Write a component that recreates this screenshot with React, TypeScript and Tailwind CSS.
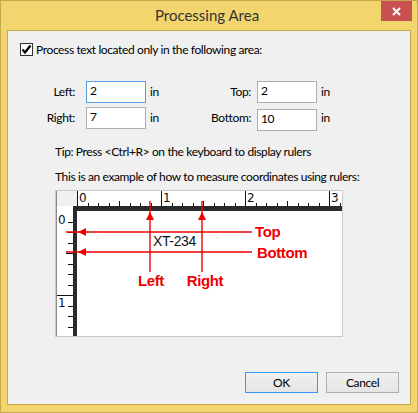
import React from "react";

const UI = { fontFamily: 'Lato, "Noto Sans", sans-serif' };

function Ruler() {
  const topTicks: number[] = [];
  for (let i = 0; i <= 25; i++) {
    const x = 22 + i * 10.5;
    if (x < 287) topTicks.push(x);
  }
  const leftTicks: number[] = [];
  for (let i = 1; i <= 11; i++) {
    const y = 21 + i * 10.5;
    if (i !== 8) leftTicks.push(y);
  }
  return (
    <svg width="288" height="147" viewBox="0 0 288 147" className="block">
      <rect x="0.5" y="0.5" width="287" height="146" fill="#ffffff" stroke="#c9c9c9" />
      <line x1="1.5" y1="1" x2="1.5" y2="146" stroke="#8a8a8a" />
      <rect x="2" y="1" width="20" height="15" fill="#f0f0f0" />
      <line x1="22.5" y1="1" x2="22.5" y2="16" stroke="#111" />
      {[106, 190, 274].map((x) => (
        <line key={x} x1={x + 0.5} y1="1" x2={x + 0.5} y2="16" stroke="#111" />
      ))}
      {topTicks.map((x, i) =>
        i % 8 === 0 ? null : (
          <line key={i} x1={Math.round(x) + 0.5} y1={i % 4 === 0 ? 11 : 13} x2={Math.round(x) + 0.5} y2="16" stroke="#111" />
        )
      )}
      <g fontFamily='"DejaVu Sans", sans-serif' fontSize="12" fill="#111">
        <text x="24" y="12">0</text>
        <text x="108" y="12">1</text>
        <text x="192" y="12">2</text>
        <text x="276" y="12">3</text>
      </g>
      <rect x="18" y="16" width="269" height="5" fill="#2a2a2a" />
      <rect x="18" y="16" width="4" height="130" fill="#2a2a2a" />
      <line x1="2" y1="105.5" x2="18" y2="105.5" stroke="#111" />
      {leftTicks.map((y, i) => (
        <line key={i} x1={i === 3 ? 11 : 13} y1={Math.round(y) + 0.5} x2="18" y2={Math.round(y) + 0.5} stroke="#111" />
      ))}
      <g fontFamily='"DejaVu Sans", sans-serif' fontSize="12" fill="#111">
        <text x="3" y="34">0</text>
        <text x="3" y="117">1</text>
      </g>
      <text x="98" y="56" fontFamily='"Liberation Sans", Arial, sans-serif' fontSize="14" fill="#111">XT-234</text>
      <rect x="41" y="48" width="1" height="1" fill="#f3c58a" />
      <rect x="161" y="47" width="1" height="1" fill="#f3c58a" />
      <g stroke="#ee0000" strokeWidth="1.4" fill="none">
        <line x1="11" y1="42" x2="197" y2="42" />
        <line x1="11" y1="62" x2="197" y2="62" />
        <line x1="95" y1="11" x2="95" y2="82" />
        <line x1="147" y1="11" x2="147" y2="82" />
      </g>
      <g fill="#ee0000">
        <polygon points="23,42 31,38 31,46" />
        <polygon points="23,62 31,58 31,66" />
        <polygon points="95,22 91,30 99,30" />
        <polygon points="147,22 143,30 151,30" />
      </g>
      <g fontFamily='"Liberation Sans", Arial, sans-serif' fontSize="15" fontWeight="bold" fill="#ee0000">
        <text x="200" y="47">Top</text>
        <text x="202" y="68">Bottom</text>
        <text x="96" y="96" textAnchor="middle">Left</text>
        <text x="150" y="96" textAnchor="middle">Right</text>
      </g>
    </svg>
  );
}

function Field({ value, focused }: { value: string; focused?: boolean }) {
  return (
    <div
      className={
        "w-[60px] h-[22px] bg-white border px-[3px] flex items-center text-[12px] leading-none text-black " +
        (focused ? "border-[#569de5]" : "border-[#abadb3]")
      }
    >
      <span className="-mt-[2px]">{value}</span>
    </div>
  );
}

export default function App() {
  return (
    <div className="w-[418px] h-[413px] bg-[#f2d56c] border border-[#c5a94f] relative flex flex-col whitespace-nowrap" style={UI}>
      <div className="h-[29px] flex items-center justify-center pr-[4px]">
        <span className="text-[15px] text-[#333333] leading-none -mt-[1px]">Processing Area</span>
      </div>
      <div className="absolute top-0 right-[5px] w-[31px] h-[20px] bg-[#c75050] flex items-center justify-center">
        <svg width="9" height="9" viewBox="0 0 9 9">
          <path d="M1 1 L8 8 M8 1 L1 8" stroke="#ffffff" strokeWidth="2" />
        </svg>
      </div>
      <div className="ml-[6px] w-[404px] h-[375px] border border-[#c5a94f] bg-[#f0f0f0] flex flex-col text-[12px] leading-[16px] tracking-[-0.38px] text-black">
        <div className="mt-[12px] ml-[12px] flex items-center h-[13px]">
          <div className="w-[13px] h-[13px] border border-[#333333] bg-white flex items-center justify-center">
            <svg width="11" height="11" viewBox="0 0 11 11">
              <path d="M1.5 5.5 L4 8.5 L9.5 1.5" stroke="#000" strokeWidth="2.2" fill="none" />
            </svg>
          </div>
          <span className="ml-[3px]">Process text located only in the following area:</span>
        </div>
        <div className="mt-[25px] flex items-center h-[22px]">
          <span className="w-[67px] text-right">Left:</span>
          <div className="ml-[11px]"><Field value="2" focused /></div>
          <span className="ml-[4px] w-[20px]">in</span>
          <span className="w-[81px] text-right">Top:</span>
          <div className="ml-[6px]"><Field value="2" /></div>
          <span className="ml-[4px]">in</span>
        </div>
        <div className="mt-[4px] flex items-center h-[22px]">
          <span className="w-[67px] text-right">Right:</span>
          <div className="ml-[11px]"><Field value="7" /></div>
          <span className="ml-[4px] w-[20px]">in</span>
          <span className="w-[81px] text-right">Bottom:</span>
          <div className="ml-[6px] mt-[3px]"><Field value="10" /></div>
          <span className="ml-[4px]">in</span>
        </div>
        <div className="mt-[15px] ml-[47px]">Tip: Press &lt;Ctrl+R&gt; on the keyboard to display rulers</div>
        <div className="mt-[9px] ml-[47px]">This is an example of how to measure coordinates using rulers:</div>
        <div className="mt-[5px] ml-[47px]">
          <Ruler />
        </div>
        <div className="mt-[35px] flex justify-end gap-[8px] mr-[11px]">
          <button className="w-[73px] h-[21px] border border-[#3399ff] bg-gradient-to-b from-[#f0f0f0] to-[#e5e5e5] text-[12px] leading-none text-black">OK</button>
          <button className="w-[73px] h-[21px] border border-[#adadad] bg-gradient-to-b from-[#f0f0f0] to-[#e5e5e5] text-[12px] leading-none text-black">Cancel</button>
        </div>
      </div>
    </div>
  );
}
